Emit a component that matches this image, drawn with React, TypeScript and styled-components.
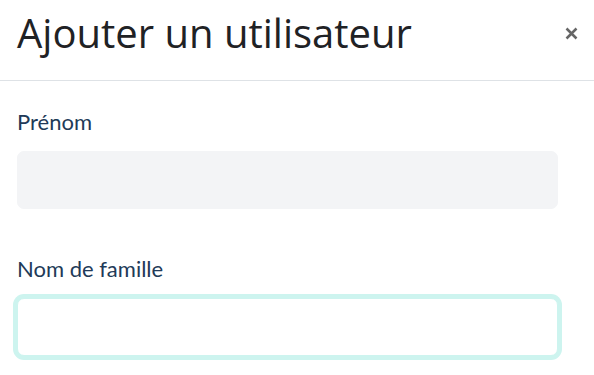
import styled, { createGlobalStyle } from 'styled-components';

const GlobalStyle = createGlobalStyle`
  body {
    margin: 0;
    background: #ffffff;
    font-family: "Open Sans", "Noto Sans", sans-serif;
  }
`;

const Modal = styled.div`
  width: 594px;
  height: 375px;
  overflow: hidden;
  background: #ffffff;
`;

const Header = styled.header`
  display: flex;
  align-items: center;
  justify-content: space-between;
  height: 81px;
  padding: 0 16px 0 17px;
  border-bottom: 1px solid #dee2e6;
  box-sizing: border-box;
`;

const Title = styled.h1`
  margin: 0;
  font-family: "Open Sans", "Noto Sans", sans-serif;
  font-size: 40px;
  font-weight: 400;
  color: #1f2225;
  line-height: 1;
  padding-bottom: 15px;
`;

const CloseButton = styled.button`
  border: none;
  background: none;
  padding: 0;
  margin-bottom: 14px;
  cursor: pointer;
  display: flex;
`;

const Body = styled.div`
  display: flex;
  flex-direction: column;
  padding: 28px 36px 0 17px;
  gap: 47px;
`;

const Field = styled.div`
  display: flex;
  flex-direction: column;
  gap: 16px;
`;

const Label = styled.label`
  font-family: Lato, "Open Sans", sans-serif;
  font-size: 22px;
  color: #213a58;
  line-height: 26px;
`;

const Input = styled.input<{ $focused?: boolean }>`
  height: 58px;
  box-sizing: border-box;
  border-radius: 7px;
  border: 1px solid ${({ $focused }) => ($focused ? '#cdf4ef' : '#f3f4f6')};
  background: ${({ $focused }) => ($focused ? '#ffffff' : '#f3f4f6')};
  box-shadow: ${({ $focused }) => ($focused ? '0 0 0 4px #cdf4ef' : 'none')};
  outline: none;
  font-size: 18px;
  padding: 0 14px;
`;

export default function App() {
  return (
    <Modal>
      <GlobalStyle />
      <Header>
        <Title>Ajouter un utilisateur</Title>
        <CloseButton aria-label="Fermer">
          <svg width="13" height="13" viewBox="0 0 13 13">
            <path d="M1.5 1.5 L11.5 11.5 M11.5 1.5 L1.5 11.5" stroke="#666666" strokeWidth="2.5" strokeLinecap="butt" />
          </svg>
        </CloseButton>
      </Header>
      <Body>
        <Field>
          <Label>Prénom</Label>
          <Input />
        </Field>
        <Field>
          <Label>Nom de famille</Label>
          <Input $focused />
        </Field>
      </Body>
    </Modal>
  );
}
